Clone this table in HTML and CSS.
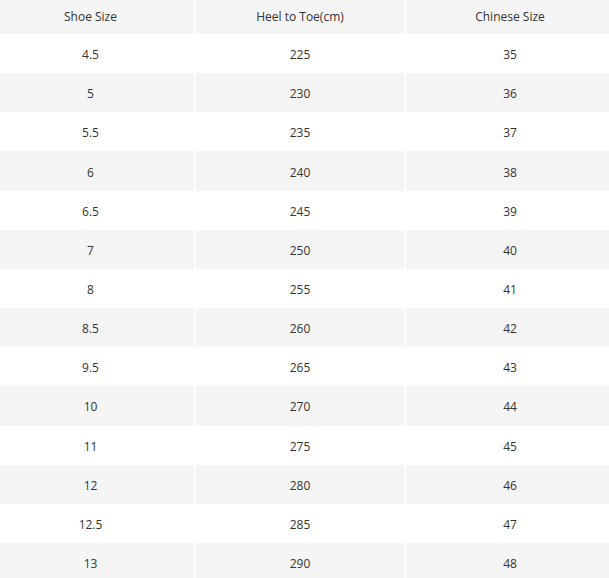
FILE: index.html
```html
<!DOCTYPE html>
<html>
<head>
<meta charset="utf-8">
<link rel="stylesheet" href="styles.css">
</head>
<body>
<div class="table">
  <div class="row head"><div class="cell">Shoe Size</div><div class="cell">Heel to Toe(cm)</div><div class="cell">Chinese Size</div></div>
  <div class="row"><div class="cell">4.5</div><div class="cell">225</div><div class="cell">35</div></div>
  <div class="row alt"><div class="cell">5</div><div class="cell">230</div><div class="cell">36</div></div>
  <div class="row"><div class="cell">5.5</div><div class="cell">235</div><div class="cell">37</div></div>
  <div class="row alt"><div class="cell">6</div><div class="cell">240</div><div class="cell">38</div></div>
  <div class="row"><div class="cell">6.5</div><div class="cell">245</div><div class="cell">39</div></div>
  <div class="row alt"><div class="cell">7</div><div class="cell">250</div><div class="cell">40</div></div>
  <div class="row"><div class="cell">8</div><div class="cell">255</div><div class="cell">41</div></div>
  <div class="row alt"><div class="cell">8.5</div><div class="cell">260</div><div class="cell">42</div></div>
  <div class="row"><div class="cell">9.5</div><div class="cell">265</div><div class="cell">43</div></div>
  <div class="row alt"><div class="cell">10</div><div class="cell">270</div><div class="cell">44</div></div>
  <div class="row"><div class="cell">11</div><div class="cell">275</div><div class="cell">45</div></div>
  <div class="row alt"><div class="cell">12</div><div class="cell">280</div><div class="cell">46</div></div>
  <div class="row"><div class="cell">12.5</div><div class="cell">285</div><div class="cell">47</div></div>
  <div class="row alt"><div class="cell">13</div><div class="cell">290</div><div class="cell">48</div></div>
</div>
</body>
</html>
```
FILE: styles.css
```css
html, body {
  margin: 0;
  padding: 0;
  background: #fff;
  overflow: hidden;
}
.table {
  width: 627px;
  margin-left: -13px;
  font-family: "Open Sans", "Noto Sans", sans-serif;
  font-size: 12px;
  color: #333;
}
.row {
  display: flex;
  gap: 2px;
  height: 39.17px;
}
.row.head {
  height: 34px;
}
.cell {
  flex: 0 0 208px;
  display: flex;
  align-items: center;
  justify-content: center;
  box-sizing: border-box;
  padding-top: 2px;
}
.cell:first-child {
  flex-basis: 207px;
}
.row.head .cell,
.row.alt .cell {
  background: #f5f5f5;
}
.row.head .cell {
  padding-top: 0;
  padding-bottom: 2px;
}
```
